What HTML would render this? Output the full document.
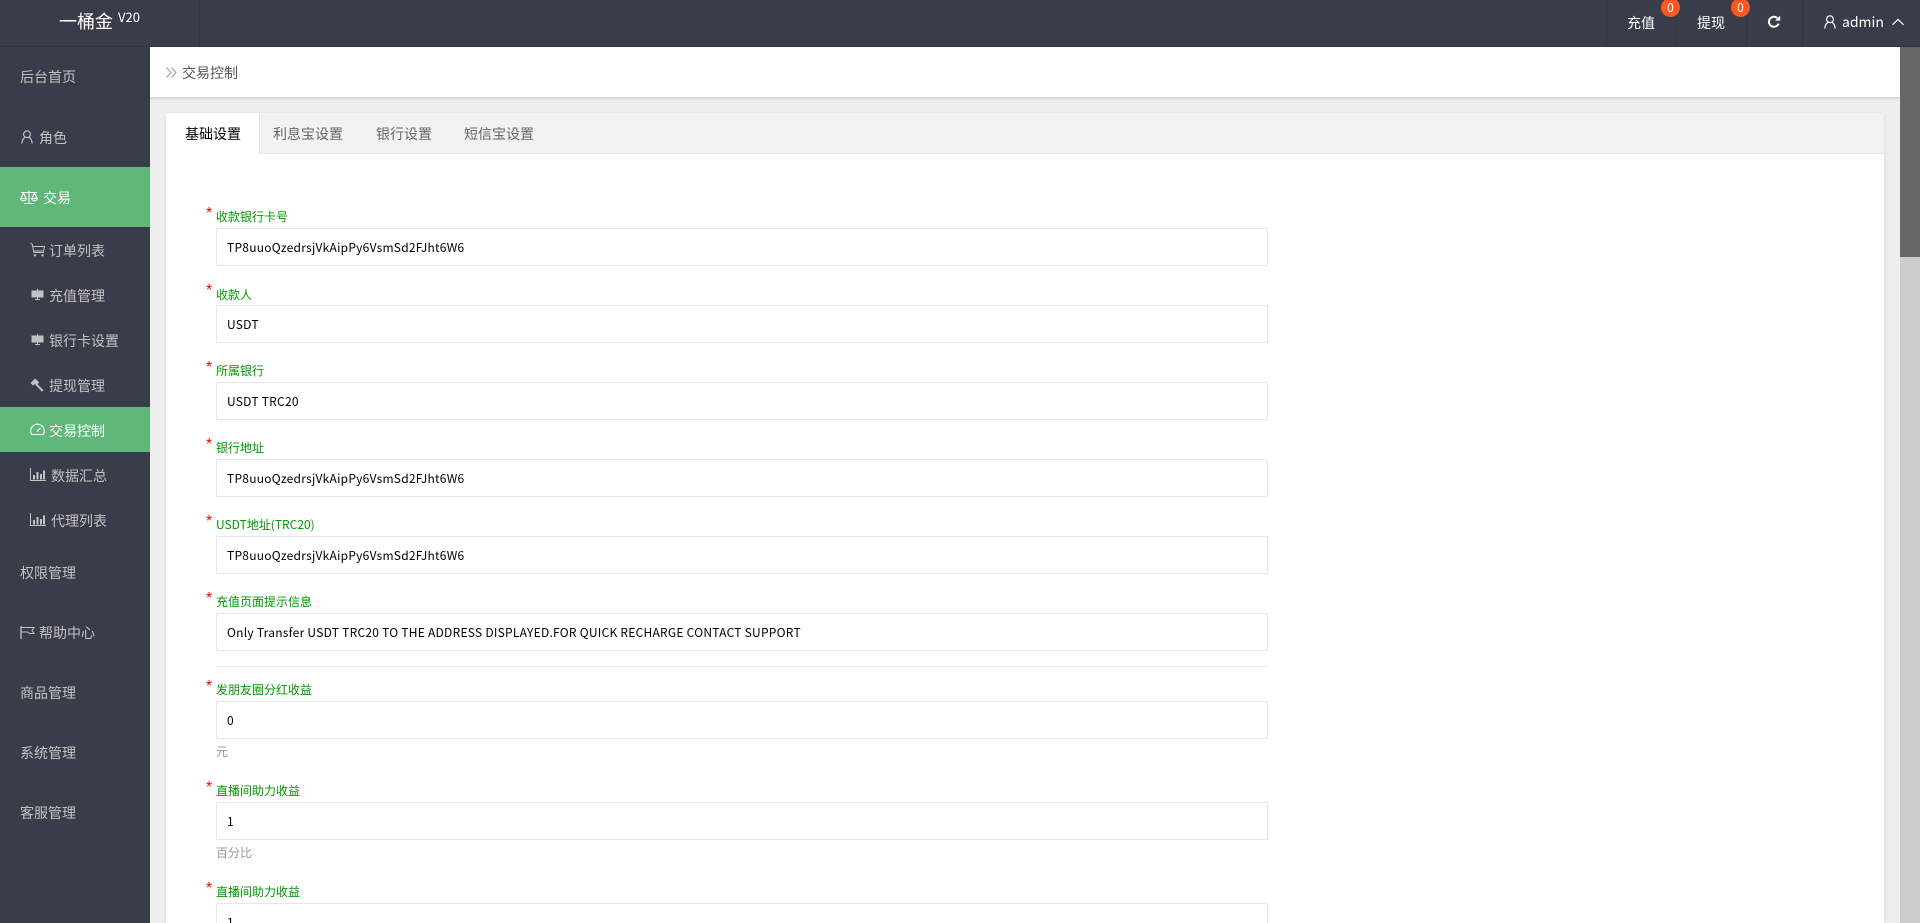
<!DOCTYPE html>
<html lang="zh-CN"><head><meta charset="utf-8"><title>交易控制</title>
<style>
*{box-sizing:border-box;margin:0;padding:0}
html,body{width:1920px;height:923px;overflow:hidden;background:#eee}
#root{position:relative;width:1920px;height:923px;overflow:hidden;background:#eee;font-family:"Noto Sans CJK SC","Liberation Sans",sans-serif;font-size:12px;color:#333}
.a{position:absolute;white-space:nowrap}
.t{line-height:20px;height:20px;margin-top:1px}
#head{left:0;top:0;width:1920px;height:47px;background:#393D49;border-bottom:1px solid #32363f}
.dv{position:absolute;top:0;width:1px;height:46px;background:#32363f}
#side{left:0;top:47px;width:150px;height:876px;background:#393D49}
.m{color:#c2c2c2;font-size:14px}
.w{color:#fff}
svg{position:absolute;overflow:visible}
.badge{position:absolute;width:19px;height:19px;border-radius:50%;background:#FF5722;color:#fff;text-align:center;font-size:12px;line-height:19px}
#crumb{left:150px;top:47px;width:1750px;height:50px;background:#fff;box-shadow:0 1px 3px rgba(0,0,0,.18)}
#card{left:166px;top:113px;width:1718px;height:810px;background:#fff;box-shadow:0 1px 4px rgba(0,0,0,.1)}
#tabs{left:166px;top:113px;width:1718px;height:41px;background:#f2f2f2;border-bottom:1px solid #e6e6e6}
#tabon{left:166px;top:113px;width:94px;height:41px;background:#fff;border-right:1px solid #e6e6e6}
.tab{font-size:14px;color:#666}
.lb{color:#090;font-size:12px;left:216px}
.st{color:#f00;font-size:16px;left:206px;line-height:14px;font-family:"Liberation Sans",sans-serif}
.in{position:absolute;left:216px;width:1052px;height:38px;background:#fff;border:1px solid #e6e6e6;border-radius:2px;padding-left:10px;line-height:37px;font-size:12px;letter-spacing:.25px;color:#000;white-space:nowrap}
.hp{color:#999;font-size:12px;left:216px}
#sb{left:1900px;top:47px;width:20px;height:876px;background:#ccc}
#th{left:1900px;top:47px;width:20px;height:210px;background:#666}
</style></head><body>
<div id="root">

<div class="a" id="head"></div>
<div class="dv" style="left:199px"></div>
<div class="dv" style="left:1606px"></div>
<div class="dv" style="left:1676px"></div>
<div class="dv" style="left:1746px"></div>
<div class="dv" style="left:1802px"></div>
<div class="a w" style="left:59px;top:8px;font-size:18px;line-height:26px">一桶金</div>
<div class="a w" style="left:118px;top:9px;font-size:13px;line-height:16px">V20</div>

<div class="a t w" style="left:1627px;top:12px;font-size:14px">充值</div>
<div class="badge" style="left:1661px;top:-2px">0</div>
<div class="a t w" style="left:1697px;top:12px;font-size:14px">提现</div>
<div class="badge" style="left:1731px;top:-2px">0</div>
<svg style="left:1767px;top:15px" width="14" height="14" viewBox="0 0 14 14"><path d="M11.6 8.6A5 5 0 1 1 10.2 3" fill="none" stroke="#fff" stroke-width="2"/><path d="M8 5.6h5.2V.6z" fill="#fff"/></svg>
<svg style="left:1824px;top:15px" width="12" height="14" viewBox="0 0 12 14"><circle cx="6" cy="4.2" r="3.4" fill="none" stroke="#fff" stroke-width="1.2"/><path d="M.8 13.5c.2-3.4 2-5.6 3.2-6.2M11.2 13.5c-.2-3.4-2-5.6-3.2-6.2" fill="none" stroke="#fff" stroke-width="1.2"/></svg>
<div class="a t w" style="left:1842px;top:11px;font-size:14px">admin</div>
<svg style="left:1892px;top:18px" width="12" height="8" viewBox="0 0 12 8"><path d="M.5 6.8L6 1.5l5.5 5.3" fill="none" stroke="#fff" stroke-width="1.2"/></svg>

<div class="a" id="side"></div>
<div class="a" style="left:0;top:167px;width:150px;height:60px;background:#5FB878"></div>
<div class="a" style="left:0;top:407px;width:150px;height:45px;background:#5FB878"></div>

<div class="a t m" style="left:20px;top:66px">后台首页</div>
<svg style="left:21px;top:130px" width="12" height="14" viewBox="0 0 12 14"><circle cx="6" cy="4.2" r="3.4" fill="none" stroke="#c2c2c2" stroke-width="1.2"/><path d="M.8 13.5c.2-3.4 2-5.6 3.2-6.2M11.2 13.5c-.2-3.4-2-5.6-3.2-6.2" fill="none" stroke="#c2c2c2" stroke-width="1.2"/></svg>
<div class="a t m" style="left:39px;top:127px">角色</div>
<svg style="left:20px;top:190px" width="18" height="14" viewBox="0 0 18 14"><path d="M1 2.5h16M9 .5v12.5M4 13.5h10M3.5 3L.8 8.5h5.4zM14.500 3l-2.700 5.500h5.400zM.8 8.500a2.700 2.200 0 0 0 5.400 0M11.800 8.500a2.700 2.200 0 0 0 5.400 0" fill="none" stroke="#fff" stroke-width="1.100"/></svg>
<div class="a t w" style="left:43px;top:187px;font-size:14px">交易</div>

<svg style="left:30px;top:243px" width="15" height="14" viewBox="0 0 15 14"><path d="M.3.500l1.700.400 2 8.600h10M3 3.500h11.500L13.500 8H4" fill="none" stroke="#c2c2c2" stroke-width="1"/><circle cx="5" cy="12.300" r="1.200" fill="#c2c2c2"/><circle cx="12.500" cy="12.300" r="1.200" fill="#c2c2c2"/></svg>
<div class="a t m" style="left:49px;top:240px">订单列表</div>
<svg style="left:31px;top:288px" width="13" height="13" viewBox="0 0 13 13"><path d="M1 3h11v6H1zM6.500.800v2M4 11.500h5M6.500 9v2.500" fill="#c2c2c2" stroke="#c2c2c2"/></svg>
<div class="a t m" style="left:49px;top:285px">充值管理</div>
<svg style="left:31px;top:333px" width="13" height="13" viewBox="0 0 13 13"><path d="M1 3h11v6H1zM6.500.800v2M4 11.500h5M6.500 9v2.500" fill="#c2c2c2" stroke="#c2c2c2"/></svg>
<div class="a t m" style="left:49px;top:330px">银行卡设置</div>
<svg style="left:30px;top:378px" width="14" height="14" viewBox="0 0 14 14"><path d="M5 .5L.5 5 3 7.500l1.600-1.500 1.600 1.600 5.800 6 1.500-1.500-6-5.800L9.200 4.200z" fill="#c2c2c2"/></svg>
<div class="a t m" style="left:49px;top:375px">提现管理</div>
<svg style="left:30px;top:423px" width="15" height="14" viewBox="0 0 15 14"><path d="M1.700 11.500A6.800 6.800 0 1 1 13.300 11.500z" fill="none" stroke="#fff" stroke-width="1.100"/><path d="M7 8.500L10.500 5" stroke="#fff" stroke-width="1.200"/></svg>
<div class="a t w" style="left:49px;top:420px;font-size:14px">交易控制</div>
<svg style="left:30px;top:468px" width="16" height="13" viewBox="0 0 16 13"><path d="M.5 0v12.500H16" fill="none" stroke="#c2c2c2"/><path d="M3 7h2v4.500H3zM6.500 4h2v7.500h-2zM10 6h2v5.500h-2zM13 2.500h2v9h-2z" fill="#c2c2c2"/></svg>
<div class="a t m" style="left:51px;top:465px">数据汇总</div>
<svg style="left:30px;top:513px" width="16" height="13" viewBox="0 0 16 13"><path d="M.5 0v12.500H16" fill="none" stroke="#c2c2c2"/><path d="M3 7h2v4.500H3zM6.500 4h2v7.500h-2zM10 6h2v5.500h-2zM13 2.500h2v9h-2z" fill="#c2c2c2"/></svg>
<div class="a t m" style="left:51px;top:510px">代理列表</div>
<div class="a t m" style="left:20px;top:562px">权限管理</div>
<svg style="left:20px;top:626px" width="15" height="13" viewBox="0 0 15 13"><path d="M1 0v13" stroke="#c2c2c2" stroke-width="1.300"/><path d="M1.500 1.500h12.500L12 4.500l2 3H9.500L7.500 6h-6" fill="none" stroke="#c2c2c2"/></svg>
<div class="a t m" style="left:39px;top:622px">帮助中心</div>
<div class="a t m" style="left:20px;top:682px">商品管理</div>
<div class="a t m" style="left:20px;top:742px">系统管理</div>
<div class="a t m" style="left:20px;top:802px">客服管理</div>

<div class="a" id="crumb"></div>
<svg style="left:166px;top:67px" width="11" height="11" viewBox="0 0 11 11"><path d="M.5.500l4.500 5-4.500 5M5.500.500l4.500 5-4.500 5" fill="none" stroke="#999" stroke-width="1"/></svg>
<div class="a t" style="left:182px;top:62px;font-size:14px;color:#555">交易控制</div>

<div class="a" id="card"></div>
<div class="a" id="tabs"></div>
<div class="a" id="tabon"></div>
<div class="a t" style="left:185px;top:123px;font-size:14px;color:#000">基础设置</div>
<div class="a t tab" style="left:273px;top:123px">利息宝设置</div>
<div class="a t tab" style="left:376px;top:123px">银行设置</div>
<div class="a t tab" style="left:464px;top:123px">短信宝设置</div>

<div class="a st" style="top:207px">*</div><div class="a t lb" style="top:206px">收款银行卡号</div>
<div class="in" style="top:228px">TP8uuoQzedrsjVkAipPy6VsmSd2FJht6W6</div>
<div class="a st" style="top:284px">*</div><div class="a t lb" style="top:284px">收款人</div>
<div class="in" style="top:305px">USDT</div>
<div class="a st" style="top:361px">*</div><div class="a t lb" style="top:360px">所属银行</div>
<div class="in" style="top:382px">USDT TRC20</div>
<div class="a st" style="top:438px">*</div><div class="a t lb" style="top:437px">银行地址</div>
<div class="in" style="top:459px">TP8uuoQzedrsjVkAipPy6VsmSd2FJht6W6</div>
<div class="a st" style="top:515px">*</div><div class="a t lb" style="top:514px">USDT地址(TRC20)</div>
<div class="in" style="top:536px">TP8uuoQzedrsjVkAipPy6VsmSd2FJht6W6</div>
<div class="a st" style="top:592px">*</div><div class="a t lb" style="top:591px">充值页面提示信息</div>
<div class="in" style="top:613px">Only Transfer USDT TRC20 TO THE ADDRESS DISPLAYED.FOR QUICK RECHARGE CONTACT SUPPORT</div>
<div class="a" style="left:216px;top:666px;width:1052px;height:1px;background:#e6e6e6"></div>
<div class="a st" style="top:680px">*</div><div class="a t lb" style="top:679px">发朋友圈分红收益</div>
<div class="in" style="top:701px">0</div>
<div class="a t hp" style="top:741px">元</div>
<div class="a st" style="top:781px">*</div><div class="a t lb" style="top:780px">直播间助力收益</div>
<div class="in" style="top:802px">1</div>
<div class="a t hp" style="top:842px">百分比</div>
<div class="a st" style="top:882px">*</div><div class="a t lb" style="top:881px">直播间助力收益</div>
<div class="in" style="top:903px">1</div>

<div class="a" id="sb"></div>
<div class="a" id="th"></div>
</div>
</body></html>
